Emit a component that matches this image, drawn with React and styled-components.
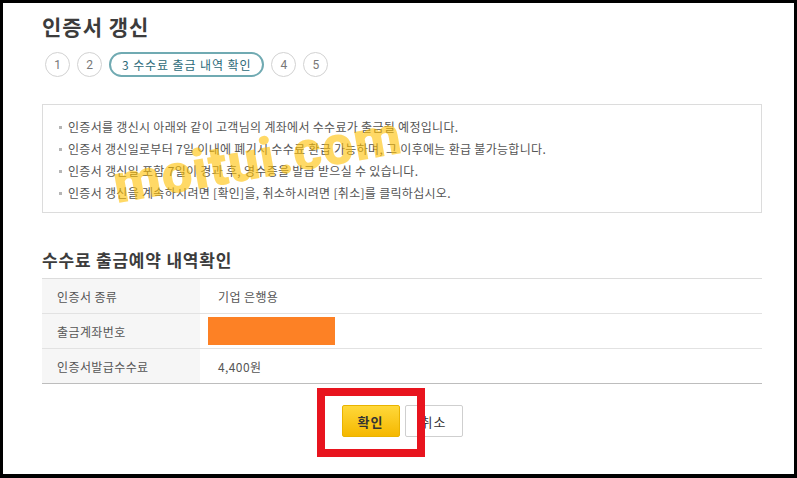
import React from 'react';
import styled, { createGlobalStyle } from 'styled-components';

const GlobalStyle = createGlobalStyle`
  html, body { margin: 0; padding: 0; background: #000; }
  body { font-family: "Noto Sans CJK KR", "Noto Sans", sans-serif; }
  * { box-sizing: border-box; }
`;

const steps = [
  { no: 1 },
  { no: 2 },
  { no: 3, label: '수수료 출금 내역 확인', active: true },
  { no: 4 },
  { no: 5 },
];

const notices = [
  '인증서를 갱신시 아래와 같이 고객님의 계좌에서 수수료가 출금될 예정입니다.',
  '인증서 갱신일로부터 7일 이내에 폐기시 수수료 환급 가능하며, 그 이후에는 환급 불가능합니다.',
  '인증서 갱신일 포함 7일이 경과 후, 영수증을 발급 받으실 수 있습니다.',
  '인증서 갱신을 계속하시려면 [확인]을, 취소하시려면 [취소]를 클릭하십시오.',
];

const App = () => {
  return (
    <>
      <GlobalStyle />
      <Frame>
        <Content>
          <Title>인증서 갱신</Title>
          <StepRow>
            {steps.map((s) => (
              <Step key={s.no} active={s.active}>
                {s.no}{s.label ? ' ' + s.label : ''}
              </Step>
            ))}
          </StepRow>

          <NoticeBox>
            {notices.map((t, i) => (
              <NoticeItem key={i}>{t}</NoticeItem>
            ))}
          </NoticeBox>

          <SectionTitle>수수료 출금예약 내역확인</SectionTitle>
          <InfoTable>
            <tbody>
              <tr>
                <th>인증서 종류</th>
                <td>기업 은행용</td>
              </tr>
              <tr>
                <th>출금계좌번호</th>
                <td><Redact /></td>
              </tr>
              <tr>
                <th>인증서발급수수료</th>
                <td>4,400원</td>
              </tr>
            </tbody>
          </InfoTable>

          <ButtonRow>
            <Btn primary>확인</Btn>
            <Btn>취소</Btn>
          </ButtonRow>
        </Content>

        <Watermark>moitui.com</Watermark>
        <Highlight />
      </Frame>
    </>
  );
};

const Frame = styled.div`
  position: relative; width: 797px; height: 478px; overflow: hidden;
  background: #fff; border: 3px solid #000; border-bottom-width: 4px;
  padding: 9px 32px 0 39px;
`;

const Content = styled.div`
  width: 720px;
`;

const Title = styled.h1`
  margin: 0; font-size: 21px; line-height: 28px; font-weight: 700; color: #3c3c3c; letter-spacing: 1px;
`;

const StepRow = styled.div`
  display: flex; align-items: center; gap: 7px; margin-top: 12px; padding-left: 3px;
`;

const Step = styled.div`
  height: 25px; min-width: 25px; display: flex; align-items: center; justify-content: center;
  border-radius: 13px; font-size: 12px; line-height: 1; white-space: nowrap;
  border: ${(p) => (p.active ? '2px solid #70aab2' : '1px solid #d2d2d2')};
  color: ${(p) => (p.active ? '#2c6a78' : '#777')};
  padding: ${(p) => (p.active ? '0 11px' : '0')};
  letter-spacing: ${(p) => (p.active ? '0.9px' : '0')};
  font-family: ${(p) => (p.active ? '"Noto Sans CJK KR", sans-serif' : 'Roboto, "Noto Sans CJK KR", sans-serif')};
`;

const NoticeBox = styled.ul`
  list-style: none; margin: 27px 0 0; padding: 11px 16px 8px;
  border: 1px solid #dcdcdc;
`;

const NoticeItem = styled.li`
  display: flex; align-items: center; gap: 6px;
  font-size: 12px; line-height: 22px; color: #555; white-space: nowrap; letter-spacing: 0.3px;
  &::before { content: ''; width: 3px; height: 3px; background: #b5b5b5; flex: none; }
`;

const SectionTitle = styled.h2`
  margin: 36px 0 7px; font-size: 17px; line-height: 22px; font-weight: 700; color: #3c3c3c; letter-spacing: 0.8px;
`;

const InfoTable = styled.table`
  width: 100%; border-collapse: collapse;
  border-top: 1px solid #dcdcdc; border-bottom: 1px solid #bdbdbd;
  tr + tr { border-top: 1px solid #e2e2e2; }
  th, td { height: 35px; padding: 0; font-size: 12px; color: #555; font-weight: 400; text-align: left; vertical-align: middle; letter-spacing: 0.4px; }
  th { width: 158px; background: #f6f6f6; padding-left: 15px; }
  td { padding-left: 18px; }
`;

const Redact = styled.div`
  width: 127px; height: 28px; margin-left: -10px; background: #fd8125;
`;

const ButtonRow = styled.div`
  display: flex; justify-content: center; gap: 5px; margin-top: 21px;
`;

const Btn = styled.button`
  width: 58px; height: 32px; border-radius: 2px; cursor: pointer;
  font-family: "Noto Sans CJK KR", sans-serif; font-size: 13px; color: #333; letter-spacing: 1px;
  font-weight: ${(p) => (p.primary ? 700 : 400)};
  background: ${(p) => (p.primary ? 'linear-gradient(#ffd83a, #f5b800)' : '#fff')};
  border: 1px solid ${(p) => (p.primary ? '#e9b300' : '#cfcfcf')};
`;

const Watermark = styled.div`
  position: absolute; left: 116px; top: 149px; transform: rotate(-10deg); transform-origin: left bottom;
  font-family: Roboto, "DejaVu Sans", sans-serif; font-weight: 900; font-size: 55px; letter-spacing: 1px;
  color: rgba(255, 192, 0, 0.6); pointer-events: none; white-space: nowrap;
`;

const Highlight = styled.div`
  position: absolute; left: 314px; top: 385px; width: 108px; height: 69px;
  border: 8px solid #e8141e; pointer-events: none;
`;

export default App;
